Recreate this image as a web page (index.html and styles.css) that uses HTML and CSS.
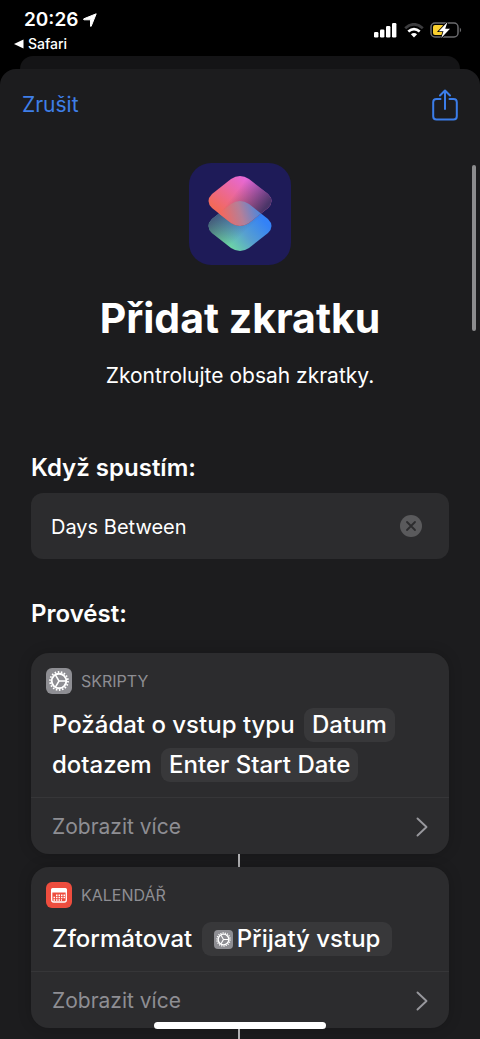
FILE: index.html
```html
<!DOCTYPE html>
<html lang="cs">
<head>
<meta charset="utf-8">
<meta name="viewport" content="width=device-width, initial-scale=1">
<title>Přidat zkratku</title>
<link rel="stylesheet" href="styles.css">
</head>
<body>
<svg class="symbols" aria-hidden="true">
  <symbol id="gear" viewBox="0 0 26 26">
    <g fill="none" stroke="#fff">
      <circle cx="13" cy="13" r="7.3" stroke-width="1.9"/>
      <circle cx="13" cy="13" r="9" stroke-width="1.8" stroke-dasharray="1.57 1.57"/>
      <path d="M13 13H20M13 13 9.400 6.800M13 13 9.400 19.200" stroke-width="1.500"/>
    </g>
  </symbol>
  <symbol id="chevron" viewBox="0 0 12 20">
    <path d="M1.5 1.5 10.5 10 1.5 18.5" fill="none" stroke="#98989d" stroke-width="1.9" stroke-linecap="round" stroke-linejoin="round"/>
  </symbol>
</svg>

<header class="status">
  <div class="status-left">
    <div class="clock">
      <span>20:26</span>
      <svg width="14" height="14" viewBox="0 0 14 14"><path d="M13.200.8 8.200 13.200Q7.700 14 7.500 13V6.800H1Q0 6.500.8 5.800Z" fill="#fff" stroke="#fff" stroke-width="1" stroke-linejoin="round"/></svg>
    </div>
    <a class="back" href="#">
      <svg width="10" height="10" viewBox="0 0 10 10"><path d="M0 5 9.500 .5V9.500Z" fill="#fff"/></svg>
      <span>Safari</span>
    </a>
  </div>
  <div class="status-right">
    <svg width="24" height="16" viewBox="0 0 24 16" fill="#fff"><rect x="0" y="10" width="4.400" height="5.500" rx="1.200"/><rect x="6" y="7.500" width="4.400" height="8" rx="1.200"/><rect x="12" y="4" width="4.400" height="11.500" rx="1.200"/><rect x="18" y="1" width="4.400" height="14.500" rx="1.200"/></svg>
    <svg width="20" height="15" viewBox="0 0 20 15" fill="none"><path d="M1.200 5.200Q10-2.500 18.800 5.200" stroke="#3c3c3e" stroke-width="2.800"/><path d="M4.300 8.500Q10 3.600 15.700 8.500" stroke="#fff" stroke-width="2.700"/><path d="M6.900 11.300Q10 8.600 13.100 11.300L10 14.500Z" fill="#fff"/></svg>
    <svg width="32" height="18" viewBox="0 0 32 18"><rect x="1" y="2" width="27" height="14" rx="4" fill="none" stroke="#6b6b6e" stroke-width="1.500"/><path d="M29.800 6.500Q32.500 9 29.800 11.500Z" fill="#6b6b6e"/><rect x="3" y="4" width="11" height="10" rx="2" fill="#fbd02f"/><path d="M17.500 1 8.800 10.200H13.500L11.200 17 20 7.800H15.200Z" fill="#fff" stroke="#000" stroke-width="1.600" paint-order="stroke"/></svg>
  </div>
</header>

<div class="sheet-behind"></div>
<main class="sheet">
  <nav class="toolbar">
    <button class="cancel" type="button">Zrušit</button>
    <button class="share" type="button" aria-label="Sdílet">
      <svg width="26" height="32" viewBox="0 0 26 32" fill="none" stroke="#3b7de9" stroke-width="2" stroke-linecap="round" stroke-linejoin="round"><path d="M8.500 10H4.500Q1.200 10 1.200 13.300V27.200Q1.200 30.500 4.500 30.500H21.500Q24.800 30.500 24.800 27.200V13.300Q24.800 10 21.500 10H17.500M13 20V2M8 6.500 13 1.500 18 6.500"/></svg>
    </button>
  </nav>

  <section class="hero">
    <svg class="app-icon" width="102" height="102" viewBox="0 0 102 102">
      <defs>
        <linearGradient id="bottom" gradientUnits="userSpaceOnUse" x1="34" y1="42" x2="68" y2="12"><stop offset="0" stop-color="#70dca0"/><stop offset=".5" stop-color="#579fd0"/><stop offset="1" stop-color="#3482f7"/></linearGradient>
        <linearGradient id="shade" gradientUnits="userSpaceOnUse" x1="24" y1="16" x2="46" y2="40"><stop offset="0" stop-color="#3c4572" stop-opacity=".85"/><stop offset="1" stop-color="#3c4572" stop-opacity="0"/></linearGradient>
        <linearGradient id="top" gradientUnits="userSpaceOnUse" x1="30" y1="34" x2="56" y2="2"><stop offset="0" stop-color="#f2695b"/><stop offset="1" stop-color="#e668d8"/></linearGradient>
        <linearGradient id="fade" gradientUnits="userSpaceOnUse" x1="50" y1="12" x2="76" y2="32"><stop offset="0" stop-color="#423263" stop-opacity="0"/><stop offset="1" stop-color="#423263" stop-opacity=".95"/></linearGradient>
        <linearGradient id="overlap" gradientUnits="userSpaceOnUse" x1="34" y1="40" x2="68" y2="30"><stop offset="0" stop-color="#ee6a62"/><stop offset=".5" stop-color="#b57f98"/><stop offset="1" stop-color="#5386d8"/></linearGradient>
        <path id="tile" d="M42 3Q51-3 60 3L79 18Q86 25 79 32L60 47Q51 53 42 47L23 32Q16 25 23 18Z"/>
        <clipPath id="lower"><use href="#tile" y="38"/></clipPath>
      </defs>
      <rect width="102" height="102" rx="22" fill="#1e1b58"/>
      <use href="#tile" y="38" fill="url(#bottom)"/>
      <use href="#tile" y="38" fill="url(#shade)"/>
      <use href="#tile" y="13" fill="url(#top)"/>
      <use href="#tile" y="13" fill="url(#fade)"/>
      <g clip-path="url(#lower)"><use href="#tile" y="13" fill="url(#overlap)"/></g>
    </svg>
    <h1>Přidat zkratku</h1>
    <p>Zkontrolujte obsah zkratky.</p>
  </section>

  <section class="group">
    <h2><label for="phrase">Když spustím:</label></h2>
    <div class="field">
      <input id="phrase" type="text" value="Days Between">
      <button class="clear" type="button" aria-label="Vymazat">
        <svg width="22" height="22" viewBox="0 0 22 22"><circle cx="11" cy="11" r="11" fill="#5a5a5c"/><path d="M7 7 15 15M15 7 7 15" stroke="#2c2c2e" stroke-width="1.800" stroke-linecap="round"/></svg>
      </button>
    </div>
  </section>

  <section class="group actions">
    <h2>Provést:</h2>
    <article class="card">
      <div class="card-head">
        <svg class="badge gray" width="26" height="26"><use href="#gear"/></svg>
        <span>SKRIPTY</span>
      </div>
      <p class="card-text">Požádat o vstup typu <span class="pill">Datum</span> dotazem <span class="pill">Enter Start Date</span></p>
      <button class="more" type="button"><span>Zobrazit více</span><svg width="12" height="20"><use href="#chevron"/></svg></button>
    </article>
    <div class="link"></div>
    <article class="card">
      <div class="card-head">
        <svg class="badge red" width="26" height="26" viewBox="0 0 26 26"><rect x="5.700" y="6.700" width="14.600" height="13.300" rx="2" fill="none" stroke="#fff" stroke-width="1.300"/><path d="M5 10.500V8Q5 6 7 6H19Q21 6 21 8V10.500Z" fill="#fff"/><g stroke="#fff" stroke-width="1.500" stroke-dasharray="1.500 1"><path d="M10 13.200H19M7.500 15.600H19M7.500 18H16"/></g></svg>
        <span>KALENDÁŘ</span>
      </div>
      <p class="card-text">Zformátovat <span class="pill with-icon"><svg class="badge gray" width="19" height="19"><use href="#gear"/></svg>Přijatý vstup</span></p>
      <button class="more" type="button"><span>Zobrazit více</span><svg width="12" height="20"><use href="#chevron"/></svg></button>
    </article>
    <div class="link"></div>
  </section>
</main>
<div class="scrollbar"></div>
<div class="home"></div>
</body>
</html>
```
FILE: styles.css
```css
* { box-sizing: border-box; }
body {
  margin: 0;
  min-height: 100vh;
  display: flex;
  flex-direction: column;
  background: #000;
  color: #fff;
  font-family: Inter, "Liberation Sans", sans-serif;
}
h1, h2, p { margin: 0; }
button { border: 0; padding: 0; background: none; color: inherit; font: inherit; }
svg { display: block; flex: none; }
.symbols { position: absolute; width: 0; height: 0; }

.status { height: 56px; padding: 8px 18px 0 14px; display: flex; justify-content: space-between; }
.clock { display: flex; align-items: center; gap: 5px; padding-left: 10px; font-size: 19px; font-weight: 600; line-height: 24px; }
.back { display: flex; align-items: center; gap: 4px; color: #fff; font-size: 14px; font-weight: 500; line-height: 24px; text-decoration: none; }
.status-right { display: flex; align-items: center; gap: 6px; height: 44px; }

.sheet-behind { height: 13px; margin: 0 20px; border-radius: 13px 13px 0 0; background: #141416; }
.sheet { flex: 1; display: flex; flex-direction: column; border-radius: 16px 16px 0 0; background: #1c1c1e; }
.toolbar { height: 72px; padding: 0 22px; display: flex; align-items: center; justify-content: space-between; }
.cancel { color: #3f7fe8; font-size: 21px; line-height: 28px; }

.hero { display: flex; flex-direction: column; align-items: center; padding-top: 22px; }
.hero h1 { margin-top: 28px; font-size: 41px; font-weight: 700; line-height: 50px; }
.hero p { margin-top: 19px; font-size: 21px; line-height: 28px; }

.group { padding: 0 31px; }
.group h2 { padding: 62px 0 9px; font-size: 24px; font-weight: 600; line-height: 32px; }
.field { display: flex; align-items: center; height: 66px; padding: 0 27px 0 20px; border-radius: 12px; background: #2c2c2e; }
.field input { flex: 1; min-width: 0; border: 0; padding: 2px 0 0; outline: 0; background: none; color: #fff; font: 20px/28px Inter, "Liberation Sans", sans-serif; }

.actions { flex: 1; display: flex; flex-direction: column; }
.actions h2 { padding: 39px 0 23px; }
.card { border-radius: 18px; background: #2c2c2e; box-shadow: 0 0 14px rgba(0, 0, 0, .2); }
.card-head { display: flex; align-items: center; gap: 9px; padding: 15px 15px 0; color: #8e8e93; font-size: 16px; line-height: 26px; }
.badge { border-radius: 6px; }
.gray { background: #8e8e93; }
.red { background: #ee4d3e; }
.card-text { padding: 11px 21px 12px; font-size: 24px; font-weight: 500; line-height: 40px; }
.pill { display: inline-block; margin-left: 3px; padding: 0 8px; border-radius: 9px; background: #38383a; line-height: 34px; white-space: nowrap; }
.with-icon { padding: 0 12px; }
.with-icon .badge { display: inline-block; margin-right: 4px; border-radius: 4px; vertical-align: -2px; }
.more { display: flex; align-items: center; justify-content: space-between; width: 100%; height: 57px; padding: 2px 21px 0; border-top: 1px solid #363638; color: #8e8e93; font-size: 21px; line-height: 28px; }
.link { align-self: center; width: 2px; height: 13px; margin-right: 2px; background: #b0b0b2; }
.link:last-child { flex: 1; height: auto; min-height: 10px; }

.scrollbar { position: fixed; top: 165px; right: 4px; width: 4px; height: 166px; border-radius: 2px; background: #8c8c8e; }
.home { position: fixed; bottom: 10px; left: 50%; width: 172px; height: 7px; margin-left: -86px; border-radius: 4px; background: #fff; }
```
